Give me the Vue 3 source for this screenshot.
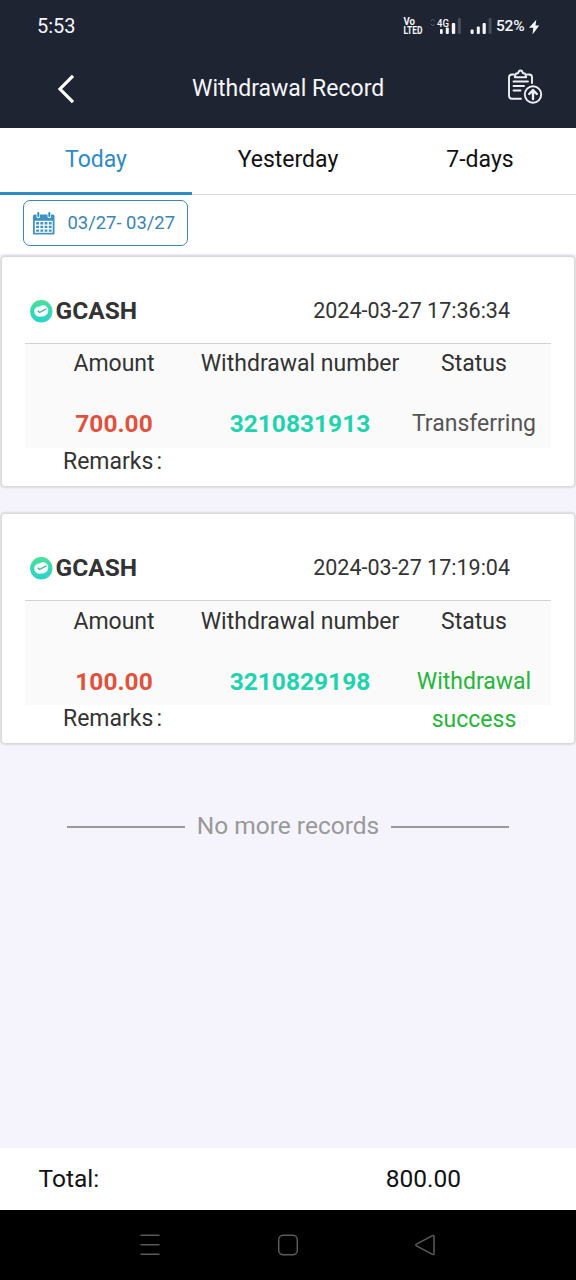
<script setup>
const tabs = [
  { label: 'Today', active: true },
  { label: 'Yesterday', active: false },
  { label: '7-days', active: false },
]
const records = [
  { method: 'GCASH', time: '2024-03-27 17:36:34', amount: '700.00', number: '3210831913', status: 'Transferring', done: false },
  { method: 'GCASH', time: '2024-03-27 17:19:04', amount: '100.00', number: '3210829198', status: 'Withdrawal success', done: true },
]
</script>

<template>
  <div class="screen">
    <header class="top">
      <div class="statusbar">
        <span class="clock">5:53</span>
        <svg class="indicators" width="92" height="24" viewBox="402 14 92 24">
          <g fill="#f4f6fb" font-family="Roboto, sans-serif" font-weight="700">
            <text x="404.500" y="25" font-size="10" textLength="11.500" lengthAdjust="spacingAndGlyphs">Vo</text>
            <text x="404.500" y="34" font-size="10.500" textLength="19" lengthAdjust="spacingAndGlyphs">LTED</text>
            <text x="438" y="26.500" font-size="11.500" font-weight="500" textLength="12" lengthAdjust="spacingAndGlyphs">4G</text>
          </g>
          <g fill="none" stroke="#596070" stroke-width="1">
            <path d="M431.800 21.200l2-2 2 2M431.800 23.800l2 2 2-2" />
          </g>
          <g fill="#f4f6fb">
            <rect x="441" y="29" width="2.700" height="5" rx="1" />
            <rect x="446.800" y="27.600" width="3" height="6.400" rx="1" />
            <rect x="452.800" y="23" width="3.400" height="11" rx="1" />
            <rect x="471.600" y="29.500" width="3" height="4.500" rx="1" />
            <rect x="477.800" y="26.500" width="3" height="7.500" rx="1" />
            <rect x="483.600" y="23" width="3.200" height="11" rx="1" />
          </g>
          <g fill="#484e5c">
            <rect x="458.900" y="18" width="3" height="16" rx="1" />
            <rect x="489.600" y="18" width="3" height="16" rx="1" />
          </g>
        </svg>
        <span class="battery">52%</span>
        <svg class="bolt" width="12" height="16" viewBox="0 0 12 16">
          <path d="M8.300 0.800L1 8.800h4.300L4.500 15.500 11.200 6.400H7.500z" fill="#f8f9fc" />
        </svg>
      </div>
      <div class="navbar">
        <svg class="back" width="22" height="34" viewBox="0 0 22 34">
          <path d="M18 3.800L5 17l13 13.200" fill="none" stroke="#fff" stroke-width="3.200" />
        </svg>
        <h1>Withdrawal Record</h1>
        <svg class="report" width="38" height="38" viewBox="0 0 38 38" fill="none" stroke="#eef0f6" stroke-width="1.900" stroke-linecap="round" stroke-linejoin="round">
          <path d="M9 6.500H7Q4 6.500 4 9.500v18.200Q4 30.800 7 30.800h9" />
          <path d="M22 6.500h2.200Q27 6.500 27 9.500V15" />
          <path d="M9.800 9.300L10.500 6.500q.3-1.300 1.700-1.300h1Q13.700 2.500 15.500 2.500t2.300 2.700h1q1.400 0 1.700 1.300l.7 2.800z" />
          <path d="M8.500 13.500h14.500M8.500 18h10.500M8.500 22.500h7" />
          <circle cx="28" cy="26.500" r="8.200" />
          <path d="M28 31v-8M24.200 26l3.800-3.900 3.800 3.900" stroke-width="2.400" />
        </svg>
      </div>
    </header>

    <nav class="tabs">
      <div v-for="tab in tabs" :key="tab.label" class="tab" :class="{ active: tab.active }">{{ tab.label }}</div>
    </nav>

    <div class="filter">
      <div class="range">
        <svg width="22" height="23" viewBox="0 0 22 23">
          <path d="M0 4q0-1.500 1.500-1.500h2v2q0 1.800 1.800 1.800T7 4.500v-2h7.500v2q0 1.800 1.800 1.800T18 4.500v-2h2Q21.500 2.500 21.500 4v17.500q0 1-1 1H1q-1 0-1-1z" fill="#3e93c6" />
          <path d="M5.300 1v3M16.300 1v3" stroke="#2d8bc5" stroke-width="2" stroke-linecap="round" />
          <path d="M1.800 8.800h17.900v12H1.800z" fill="#fff" />
          <g fill="#3e93c6">
            <path d="M3.200 10h2.800v2.400H3.200zM7.400 10h2.800v2.400H7.400zM11.600 10h2.800v2.400h-2.800zM15.800 10h2.800v2.400h-2.800z" />
            <path d="M3.200 13.700h2.800v2.400H3.200zM7.400 13.700h2.800v2.400H7.400zM11.600 13.700h2.800v2.400h-2.800zM15.800 13.700h2.800v2.400h-2.800z" />
            <path d="M3.200 17.400h2.800v2.400H3.200zM7.400 17.400h2.800v2.400H7.400zM11.600 17.400h2.800v2.400h-2.800zM15.800 17.400h2.800v2.400h-2.800z" />
          </g>
        </svg>
        <span>03/27- 03/27</span>
      </div>
    </div>

    <main>
      <article v-for="r in records" :key="r.number" class="card">
        <div class="head">
          <svg width="24" height="24" viewBox="0 0 24 24">
            <defs>
              <linearGradient :id="'g' + r.number" x1="0" y1="0" x2="0" y2="1">
                <stop offset="0" stop-color="#4bdf9c" />
                <stop offset="1" stop-color="#29d3ca" />
              </linearGradient>
            </defs>
            <circle cx="12.300" cy="12.300" r="11.200" :fill="`url(#g${r.number})`" />
            <path d="M6.500 9q1.500-1.800 4-1.600 1.500-1.400 4-1.200 3 0 3.500 2 1.700 1.200 1.200 3.800-.2 3-2.200 4-1.500 1.800-4.500 1.500-3 .8-5-.8Q5.200 15.500 5.300 13 4.800 10.500 6.500 9z" fill="#f2fffb" />
            <path d="M8.800 11.800l1.800 1.700 6.800-3.700" fill="none" stroke="#4aa998" stroke-width="1.200" />
          </svg>
          <strong>{{ r.method }}</strong>
          <time>{{ r.time }}</time>
        </div>
        <div class="table">
          <div class="cell">Amount</div>
          <div class="cell">Withdrawal number</div>
          <div class="cell">Status</div>
          <div class="cell amount">{{ r.amount }}</div>
          <div class="cell number">{{ r.number }}</div>
          <div class="cell status" :class="{ done: r.done }">{{ r.status }}</div>
        </div>
        <div class="remarks">Remarks<span>:</span></div>
      </article>
      <div class="end"><i></i><span>No more records</span><i></i></div>
    </main>

    <footer class="total"><span>Total:</span><span class="sum">800.00</span></footer>

    <div class="system">
      <svg width="24" height="24" viewBox="0 0 24 24"><path d="M2.500 2.300h19M2.500 11.800h19M2.500 21.300h19" /></svg>
      <svg width="24" height="24" viewBox="0 0 24 24"><rect x="2.700" y="2.200" width="18.600" height="19.600" rx="4.500" /></svg>
      <svg width="24" height="24" viewBox="0 0 24 24"><path d="M19.400 2.700q1.600-.8 1.600 1v16.600q0 1.800-1.600 1L3.500 12.900q-1.500-.9 0-1.800z" /></svg>
    </div>
  </div>
</template>

<style>
body {
  margin: 0;
}
</style>

<style scoped>
.screen {
  width: 576px;
  height: 1280px;
  display: flex;
  flex-direction: column;
  overflow: hidden;
  background: #f5f4fc;
  color: #333;
  font-family: Roboto, sans-serif;
  font-size: 23px;
}
.screen * {
  box-sizing: border-box;
}
.top {
  height: 128px;
  flex: none;
  background: #1f2433;
  color: #f5f6fa;
}
.statusbar {
  height: 52px;
  padding: 0 36px 0 37px;
  display: flex;
  align-items: center;
}
.clock {
  font-size: 20px;
  margin-right: auto;
}
.indicators {
  margin-right: 3px;
}
.battery {
  width: 30px;
  font-size: 15.500px;
  font-weight: 500;
  letter-spacing: -0.2px;
  white-space: nowrap;
}
.bolt {
  margin: 2px 0 0 2px;
}
.navbar {
  height: 72px;
  padding: 1px 33px 0 55px;
  display: flex;
  align-items: center;
  justify-content: space-between;
}
h1 {
  width: 194px;
  margin: 1px 0 0 -4px;
  font-size: 23px;
  font-weight: 400;
  line-height: 30px;
  white-space: nowrap;
}
.report {
  margin-top: -3px;
}
.tabs {
  height: 67px;
  flex: none;
  display: grid;
  grid-template-columns: repeat(3, 1fr);
  background: #fff;
  color: #111;
}
.tab {
  text-align: center;
  line-height: 63px;
  border-bottom: 1px solid #d9d9d9;
}
.tab.active {
  color: #2d8bc5;
  border-bottom: 3px solid #2d8bc5;
}
.filter {
  height: 59px;
  flex: none;
  padding: 5px 23px 0;
  background: #fff;
}
.range {
  width: 165px;
  height: 46px;
  padding: 0 0 0 9px;
  display: flex;
  align-items: center;
  gap: 12.500px;
  border: 1.500px solid #3c87b3;
  border-radius: 7px;
  color: #3985b3;
  font-size: 18.400px;
  white-space: nowrap;
}
.range span {
  margin-top: -2px;
}
main {
  flex: 1;
  padding: 3px 2px 0;
}
.card {
  height: 229px;
  margin-bottom: 28px;
  padding: 0 23px;
  background: #fff;
  border-radius: 3px;
  box-shadow: 0 0 2px 2px #d9d9db;
}
.head {
  height: 87px;
  padding: 21px 41px 0 4px;
  display: flex;
  align-items: center;
  border-bottom: 1.500px solid #d2d2d2;
}
.head strong {
  margin-left: 2.500px;
  font-size: 24.500px;
}
time {
  margin-left: auto;
  font-size: 21.500px;
}
.table {
  height: 104px;
  padding-top: 1px;
  display: grid;
  grid-template-columns: 178px 194px 154px;
  grid-template-rows: 60px 38px;
  background: #fafafa;
}
.cell {
  display: flex;
  justify-content: center;
  line-height: 38.400px;
  white-space: nowrap;
}
.amount,
.number {
  font-size: 24.500px;
  font-weight: 700;
  line-height: 37.500px;
}
.amount {
  color: #e0523d;
}
.number {
  color: #1fd3ae;
}
.status {
  color: #555;
  white-space: normal;
  text-align: center;
}
.status.done {
  color: #25b63a;
}
.card:nth-child(2) .table {
  padding-top: 2px;
}
.remarks {
  padding-left: 38px;
  line-height: 28px;
}
.remarks span {
  margin-left: 3px;
}
.end {
  margin-top: 67px;
  display: flex;
  align-items: center;
  justify-content: center;
  gap: 12px;
  color: #999;
  font-size: 24.500px;
  line-height: 32px;
}
.end i {
  width: 118px;
  height: 2px;
  margin-top: 2px;
  background: #999;
}
.total {
  height: 62px;
  flex: none;
  padding: 0 0 2px 38.500px;
  display: flex;
  align-items: center;
  background: #fff;
  color: #111;
  font-size: 24.500px;
}
.sum {
  margin-left: auto;
  margin-right: 115px;
}
.system {
  height: 70px;
  flex: none;
  padding: 0 139px 0 138px;
  display: flex;
  align-items: center;
  justify-content: space-between;
  background: #000;
}
.system svg {
  fill: none;
  stroke: #5b5b5b;
  stroke-width: 1.500;
}
</style>
